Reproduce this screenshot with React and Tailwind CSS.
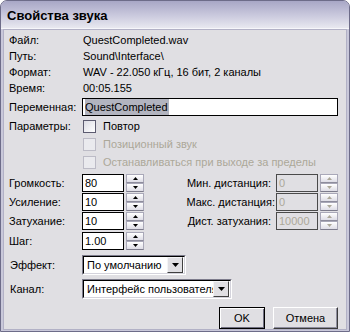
import React from 'react';

const font = "font-['Liberation_Sans',Arial,sans-serif]";

function Arrow({ up, disabled }) {
  return (
    <svg width="5" height="3" viewBox="0 0 5 3">
      <path d={up ? 'M0 3 L2.5 0 L5 3 Z' : 'M0 0 L5 0 L2.5 3 Z'} fill={disabled ? '#aca899' : '#000'} />
    </svg>
  );
}

function Spinner({ disabled }) {
  return (
    <div className="ml-[2px] flex h-[18px] w-[18px] flex-col">
      <div className="flex h-[9px] items-center justify-center border border-[#a9a8b8] border-b-[#8d8c9c] bg-gradient-to-b from-white to-[#dedde6]">
        <Arrow up disabled={disabled} />
      </div>
      <div className="flex h-[9px] items-center justify-center border border-[#a9a8b8] border-b-[#7d7c8c] bg-gradient-to-b from-white to-[#dedde6]">
        <Arrow disabled={disabled} />
      </div>
    </div>
  );
}

function SpinBox({ value, disabled }) {
  return (
    <div className="flex items-center">
      <div
        className={`flex h-[18px] w-[42px] items-center border px-[2px] ${
          disabled ? 'border-[#4a4a4a] bg-[#e0dfe3] text-[#aca899]' : 'border-black bg-white text-black'
        }`}
      >
        {value}
      </div>
      <Spinner disabled={disabled} />
    </div>
  );
}

function Check({ label, disabled }) {
  return (
    <div className="flex h-[18px] items-center">
      <div className="w-[73px]" />
      <div
        className={`ml-[1px] h-[13px] w-[13px] border ${
          disabled ? 'border-[#bcbbc6] bg-[#eaeaee]' : 'border-[#5c5b70] bg-gradient-to-br from-[#dcdce4] to-white'
        }`}
      />
      <span className={`ml-[7px] ${disabled ? 'text-[#aca899]' : 'text-black'}`}>{label}</span>
    </div>
  );
}

function DropArrow() {
  return (
    <div className="flex h-[16px] w-[16px] shrink-0 items-center justify-center border border-t-[#f4f4f6] border-l-[#f4f4f6] border-b-[#404040] border-r-[#404040] bg-[#e0dfe3]">
      <svg width="7" height="4" viewBox="0 0 7 4">
        <path d="M0 0 L7 0 L3.5 4 Z" fill="#000" />
      </svg>
    </div>
  );
}

function Select({ value, width }) {
  return (
    <div className={`flex h-[20px] ${width} items-center border border-t-[#7d7c8c] border-l-[#7d7c8c] border-b-white border-r-white`}>
      <div className="flex h-full flex-1 items-center overflow-hidden border border-t-black border-l-black border-b-[#d4d3dc] border-r-[#d4d3dc] bg-white pl-[3px] pr-[1px]">
        <span className="flex-1 overflow-hidden whitespace-nowrap">{value}</span>
        <DropArrow />
      </div>
    </div>
  );
}

function InfoRow({ label, value }) {
  return (
    <div className="flex h-[16px] items-center">
      <div className="w-[74px]">{label}</div>
      <div>{value}</div>
    </div>
  );
}

function ParamRow({ label, value, rLabel, rValue, rWide }) {
  return (
    <div className="flex h-[18px] items-center">
      <div className="w-[73px]">{label}</div>
      <SpinBox value={value} />
      {rLabel && (
        <>
          <div className={`flex flex-1 justify-end whitespace-nowrap ${rWide ? 'pr-[1px]' : 'pr-[5px]'}`}>{rLabel}</div>
          <SpinBox value={rValue} disabled />
        </>
      )}
    </div>
  );
}

export default function App() {
  return (
    <div className={`${font} h-[332px] w-[350px] bg-white text-[11px] text-black`}>
      <div className="flex h-full flex-col overflow-hidden rounded-t-[7px] border border-[#6d6c89] bg-[#c9c8da]">
        {/* Title bar */}
        <div className="flex h-[28px] shrink-0 items-center border-b border-b-[#f6f6fa] bg-gradient-to-b from-[#a8a7c6] via-[#c8c7dc] to-[#e8e8f0] pl-[6px]">
          <span className="pt-[3px] text-[13px] font-bold text-black">Свойства звука</span>
        </div>

        {/* Body */}
        <div className="mx-[2px] mb-[2px] flex flex-1 flex-col border border-[#b2b1c6] bg-[#e0dfe3] pl-[5px] pr-[8px] pt-[2px]">
          <InfoRow label="Файл:" value="QuestCompleted.wav" />
          <InfoRow label="Путь:" value="Sound\Interface\" />
          <InfoRow label="Формат:" value="WAV - 22.050 кГц, 16 бит, 2 каналы" />
          <InfoRow label="Время:" value="00:05.155" />

          <div className="mt-[2px] flex h-[18px] items-center">
            <div className="w-[73px]">Переменная:</div>
            <div className="flex h-[18px] w-[256px] items-center border border-black bg-white px-[2px]">
              <span className="bg-[#b2b4bf] pr-[1px] text-black">QuestCompleted</span>
            </div>
          </div>

          <div className="mt-[1px] flex h-[18px] items-center">
            <div className="w-[73px]">Параметры:</div>
            <div className="ml-[1px] h-[13px] w-[13px] border border-[#5c5b70] bg-gradient-to-br from-[#dcdce4] to-white" />
            <span className="ml-[7px]">Повтор</span>
          </div>
          <Check label="Позиционный звук" disabled />
          <Check label="Останавливаться при выходе за пределы" disabled />

          <div className="mt-[3px] flex flex-col gap-[1px]">
            <ParamRow label="Громкость:" value="80" rLabel="Мин. дистанция:" rValue="0" />
            <ParamRow label="Усиление:" value="10" rLabel="Макс. дистанция:" rValue="0" rWide />
            <ParamRow label="Затухание:" value="10" rLabel="Дист. затухания:" rValue="10000" />
          </div>
          <div className="mt-[2px]">
            <ParamRow label="Шаг:" value="1.00" />
          </div>

          <div className="mt-[5px] flex h-[20px] items-center">
            <div className="w-[73px] pl-[1px]">Эффект:</div>
            <Select value="По умолчанию" width="w-[104px]" />
          </div>
          <div className="mt-[4px] flex h-[20px] items-center">
            <div className="w-[73px] pl-[1px]">Канал:</div>
            <Select value="Интерфейс пользователя" width="w-[150px]" />
          </div>

          <div className="mt-[8px] flex justify-end gap-[8px]">
            <button className="flex h-[22px] w-[46px] items-center justify-center border border-black bg-[#e0dfe3] shadow-[inset_1px_1px_0_#fff,inset_-1px_-1px_0_#6f6e80]">
              OK
            </button>
            <button className="flex h-[22px] w-[65px] items-center justify-center border border-t-white border-l-white border-b-[#3a3a3a] border-r-[#3a3a3a] bg-[#e0dfe3] shadow-[inset_-1px_-1px_0_#8e8d9e]">
              Отмена
            </button>
          </div>
        </div>
      </div>
    </div>
  );
}
